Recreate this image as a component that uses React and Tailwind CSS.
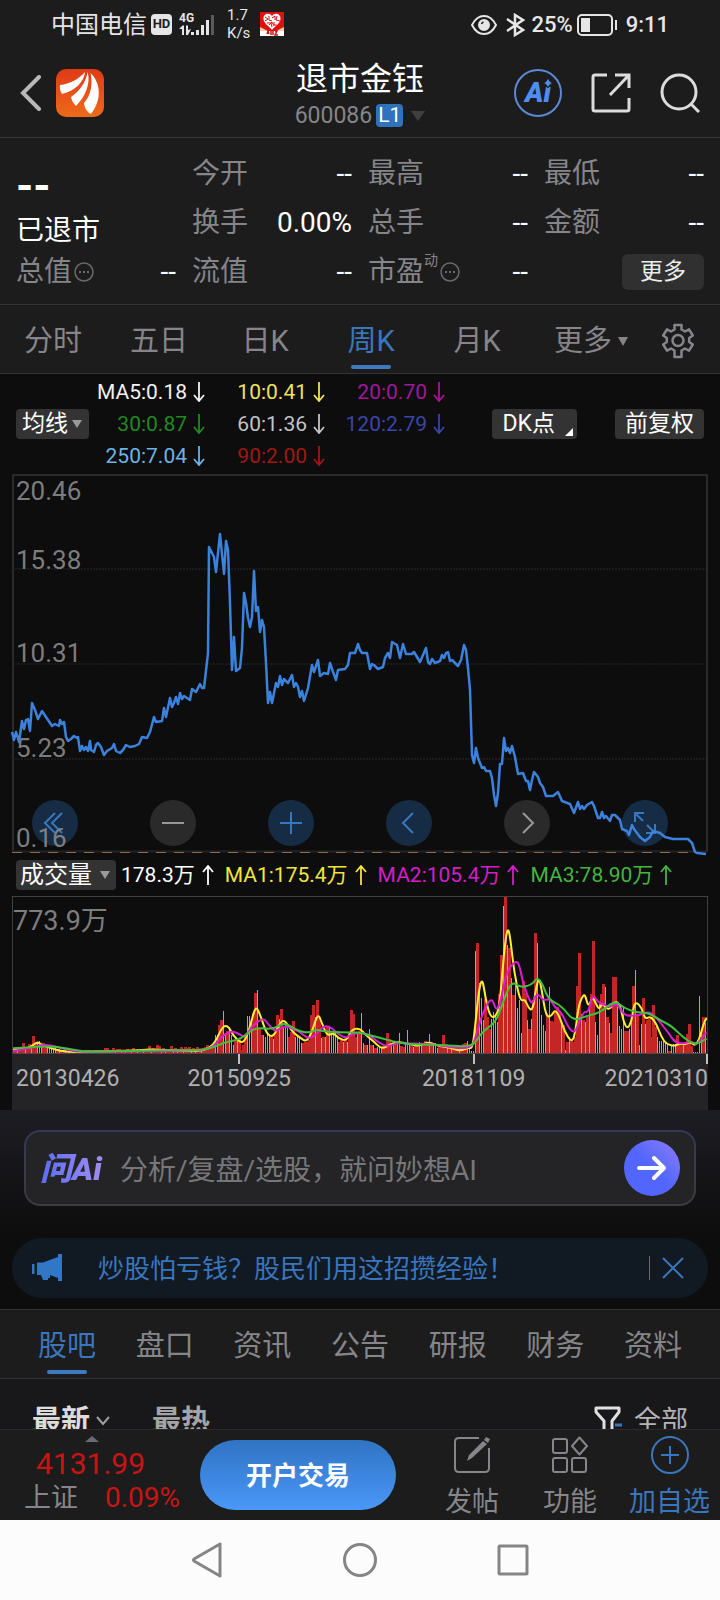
import React, { useState } from "react";
import clsx from "clsx";

const quoteRows = [
  [
    { label: "今开", value: "--" },
    { label: "最高", value: "--" },
    { label: "最低", value: "--" },
  ],
  [
    { label: "换手", value: "0.00%" },
    { label: "总手", value: "--" },
    { label: "金额", value: "--" },
  ],
];

const periods = ["分时", "五日", "日K", "周K", "月K"];

const averages = [
  { text: "MA5:0.18", color: "text-[#f2f2f2]" },
  { text: "10:0.41", color: "text-[#f0e060]" },
  { text: "20:0.70", color: "text-[#a0189a]" },
  { text: "30:0.87", color: "text-[#1f8a1f]" },
  { text: "60:1.36", color: "text-[#c4c4c4]" },
  { text: "120:2.79", color: "text-[#3a45a8]" },
  { text: "250:7.04", color: "text-[#6db3e6]" },
  { text: "90:2.00", color: "text-[#a01814]" },
];

const volumeAverages = [
  { text: "178.3万", color: "text-white" },
  { text: "MA1:175.4万", color: "text-[#f2e53a]" },
  { text: "MA2:105.4万", color: "text-[#d21fca]" },
  { text: "MA3:78.90万", color: "text-[#45b53f]" },
];

const sections = ["股吧", "盘口", "资讯", "公告", "研报", "财务", "资料"];

// closing price, x y pairs
const priceLine =
  "12,732 14,740 16,732 19,742 22,721 24,729 26,720 28,719 30,731 32,703 35,710 38,719 42,711 46,717 52,726 55,724 59,726 60,720 62,724 64,722 66,737 68,741 71,739 74,736 77,738 78,737 80,751 82,746 84,750 86,747 88,751 90,741 91,750 94,752 96,745 98,743 101,747 104,755 107,751 112,748 114,744 116,751 120,753 123,750 126,745 130,747 135,746 139,744 142,737 147,738 150,732 154,717 156,722 162,721 164,708 166,717 170,698 172,707 174,703 176,697 178,704 180,693 182,699 184,696 190,700 192,689 196,692 200,684 202,688 204,688 207,662 208,653 209,547 214,557 216,572 220,534 224,574 226,541 228,550 230,603 232,670 234,637 236,671 240,668 242,648 244,593 246,603 248,618 250,627 252,617 254,571 256,611 258,607 260,632 262,620 264,627 266,663 268,703 270,692 272,703 276,683 278,687 280,676 282,685 284,679 288,683 292,675 294,687 296,683 298,687 300,697 302,691 304,701 308,688 312,665 314,672 318,660 320,676 324,673 328,674 330,663 332,669 336,680 338,670 345,669 348,665 350,653 355,653 358,644 360,650 362,653 367,653 370,669 372,664 374,665 378,669 383,667 385,658 388,653 390,658 392,642 397,645 400,658 403,644 406,654 412,654 414,652 420,662 423,655 426,648 428,662 430,664 432,659 435,663 440,661 442,655 444,658 446,653 448,652 450,661 452,660 458,666 461,660 464,645 466,650 468,668 470,690 472,755 474,763 476,748 478,758 482,768 484,767 486,771 490,771 492,778 494,795 496,806 498,793 500,764 502,764 504,738 506,751 508,748 510,753 512,746 515,757 518,774 523,773 526,781 528,781 530,790 532,780 534,772 538,777 540,783 543,787 546,796 553,796 558,792 562,801 570,804 574,813 578,802 580,809 582,806 584,809 587,805 592,802 594,806 598,818 600,818 602,812 604,818 606,816 610,821 612,815 615,815 620,820 622,829 627,831 629,835 632,825 634,829 640,837 645,841 650,837 653,831 660,833 665,837 673,839 680,839 688,839 692,843 695,852 697,853 706,854";

// weekly volume, r = up week, c = down week, number = height
const volumeBars =
  "r5 r5 c4 r6 r5 r10 c5 r4 r9 c5 r17 r9 c10 c12 c9 r10 r8 c8 c7 c6 c5 c5 r4 c4 r3 r3 c3 r2 c2 r3 c2 r3 r3 c2 r3 r2 c3 r3 r3 c2 r2 r3 r3 c2 r2 r3 r5 r5 c3 r3 r5 c3 r4 r4 c3 r3 c3 r4 r3 c3 r5 r3 c4 r3 r4 c3 r4 r3 r7 c4 r5 r4 r8 r7 c4 r5 c3 r4 r4 r7 c4 r5 c3 r4 r6 c4 r6 r5 r6 c4 r5 c4 r6 r4 c4 r5 r6 r8 r7 r8 r7 c18 c18 r28 r33 c42 c20 r22 c26 c18 c8 r13 c13 r15 r3 r8 r17 c37 c37 c34 r40 r60 c63 r25 r18 c18 c16 c20 c18 r16 c14 r20 r38 c34 r44 c26 c29 c26 r16 r21 r32 c16 c18 c16 c10 r10 r11 r11 r13 r38 r48 c36 r53 r36 c15 r16 c16 r26 c26 c18 c21 c20 c16 r11 r13 c11 r13 c11 r20 r43 r39 r16 c20 r22 c40 c10 r8 c8 c24 r8 c8 r5 c6 c7 c5 r7 r6 r20 r14 c10 c11 r9 c10 c20 r7 r6 c9 c23 c8 r7 c6 r9 r8 c11 c7 r8 r12 r10 c19 r10 c8 c10 c5 r9 r8 r18 r9 c7 r6 c5 r6 r7 r6 c7 r6 r9 r10 c12 c8 c2 c2 c102 r110 c70 c55 c33 r54 r36 r24 c34 c41 c39 c31 r59 r98 c147 r156 c108 r105 c75 r58 c70 c45 c53 c20 r72 r60 c33 r24 c34 r53 r120 c110 c54 c38 c28 c22 r38 c66 r32 r31 r40 r46 r41 c31 r28 c3 r11 c16 r13 r11 r16 r67 r100 c39 r33 c31 r36 c45 r59 r112 c31 c18 c49 r59 r69 c66 r36 c30 r20 r76 r76 c49 c27 c24 c46 r22 r22 c24 c36 r67 c83 r39 c8 c29 r55 c29 r33 r34 r16 r48 r26 c16 c12 c12 c14 c11 c9 r2 c8 c9 c9 r18 r9 r9 c9 r11 r19 r29 r7 c1 c1 c1 c57 c24 r36 c30 c34";

const volumeCurves = [
  {
    color: "#ffee33",
    points:
      "38,568 80,562 97,555 112,542 125,552 150,560 180,570 220,573 330,570 425,568 450,565 500,568 600,570 625,563 645,545 668,495 685,495 700,525 725,548 740,530 757,470 768,434 782,465 800,520 820,528 835,495 850,475 866,495 880,515 900,530 920,543 937,510 954,455 967,490 982,525 1000,515 1015,532 1040,540 1055,505 1080,502 1095,520 1120,540 1145,565 1170,550 1195,542 1230,550 1260,555 1285,542 1315,555 1350,560 1380,570 1405,560 1418,562 1427,480 1437,385 1447,350 1457,415 1470,465 1485,470 1498,440 1510,300 1518,225 1525,200 1532,240 1542,330 1560,420 1575,415 1585,440 1598,450 1608,380 1617,350 1625,385 1638,468 1655,465 1665,445 1680,470 1695,515 1715,544 1725,520 1735,440 1745,410 1755,398 1765,440 1778,405 1788,430 1798,445 1807,425 1820,445 1835,440 1845,420 1860,430 1870,480 1882,505 1895,480 1900,440 1908,422 1925,440 1935,475 1952,465 1970,490 1985,530 2000,550 2025,555 2035,548 2055,550 2070,542 2085,555 2098,535 2110,490 2120,470",
  },
  {
    color: "#d81fd0",
    points:
      "38,570 100,560 120,552 150,552 190,562 225,572 300,572 600,568 640,560 660,530 690,510 710,515 735,530 755,495 790,470 805,490 825,512 845,500 860,495 880,505 900,512 925,535 950,520 965,500 985,493 1010,515 1035,532 1055,520 1080,515 1105,520 1130,540 1160,558 1195,545 1230,548 1280,548 1330,555 1380,562 1418,558 1432,510 1450,450 1475,407 1488,450 1500,430 1520,330 1550,296 1560,320 1570,370 1595,435 1605,405 1617,400 1630,420 1650,412 1665,440 1685,455 1705,500 1723,517 1735,490 1752,450 1765,455 1778,398 1795,425 1813,430 1830,440 1850,425 1870,460 1890,465 1920,462 1945,452 1965,465 1985,490 2005,515 2025,545 2055,548 2070,540 2090,552 2105,530 2120,515",
  },
  {
    color: "#3fc23f",
    points:
      "38,562 80,560 150,555 200,562 250,572 300,572 400,570 500,567 600,568 640,560 670,545 720,535 745,515 770,500 820,505 850,486 870,495 900,512 930,515 950,505 980,513 1060,514 1080,515 1140,530 1190,545 1240,550 1330,552 1418,558 1440,520 1465,500 1490,478 1510,420 1535,360 1560,380 1595,372 1612,348 1628,370 1645,415 1685,435 1720,480 1760,465 1800,455 1845,418 1870,440 1910,455 1945,455 1985,480 2015,495 2050,530 2085,552 2120,533",
  },
];

const smooth = (points) => {
  const p = points.split(" ").map((s) => s.split(",").map(Number));
  let d = `M${p[0][0]} ${p[0][1]}`;
  for (let i = 1; i < p.length - 1; i++) {
    const mx = (p[i][0] + p[i + 1][0]) / 2;
    const my = (p[i][1] + p[i + 1][1]) / 2;
    d += `Q${p[i][0]} ${p[i][1]} ${mx} ${my}`;
  }
  const last = p[p.length - 1];
  return d + `L${last[0]} ${last[1]}`;
};

function Icon({ className, box = "0 0 24 24", width = 2, children }) {
  return (
    <svg
      className={clsx("shrink-0", className)}
      viewBox={box}
      fill="none"
      stroke="currentColor"
      strokeWidth={width}
      aria-hidden="true"
    >
      {children}
    </svg>
  );
}

function StatusBar() {
  return (
    <div className="flex h-12 items-center justify-between pl-[51px] pr-[51px] text-[#e6e6e6]">
      <div className="flex items-center">
        <span className="pt-0.5 text-2xl leading-8">中国电信</span>
        <span className="ml-1 flex h-[21px] w-[21px] items-center justify-center rounded bg-[#e6e6e6] text-[13px] font-bold text-[#1c1c1c]">
          HD
        </span>
        <div className="ml-[7px] flex w-9 flex-col">
          <span className="text-xs font-bold leading-3">4G</span>
          <svg className="-mt-2.5 h-[22px] w-9" viewBox="0 0 36 22" fill="currentColor">
            <path d="M0 15L3.500 11.500H5V21H3V15ZM7 11.500H9V16L12 15L9 21H7Z" />
            <path d="M12 18h3v3h-3zM17 16h3v5h-3zM22 11h3v10h-3zM27 6h3v15h-3z" />
            <path d="M32 1h3v20h-3z" fill="#5a5a5a" />
          </svg>
        </div>
        <div className="ml-3 flex flex-col text-[15px] leading-[18px]">
          <span>1.7</span>
          <span>K/s</span>
        </div>
        <svg className="ml-2.5 h-6 w-6" viewBox="0 0 24 24">
          <path fill="#e01010" d="M0 0h24v24H0z" />
          <path fill="#fff" d="M12 4C9 0 3 2 3.500 7C4 12 9 14 12 18C15 14 20 12 20.500 7C21 2 15 0 12 4Z" />
          <path
            stroke="#e01010"
            fill="none"
            d="M5 5l3 2-3 2M9 4v4l3 1M12 6l3-2v4M17 4l-1 4 4 1M7 11h4l1 4M14 10v3h3M9 13l3-3 2 4"
          />
          <path fill="#f7c9a0" d="M0 15l8 4h8l8-4v4H0z" />
          <path fill="#fff" d="M0 19h24v5H0z" />
          <path stroke="#c01818" fill="none" strokeWidth="1.500" d="M7 22l1-3 1 3M11 19v4M13 19v4M15 19h2l-2 4h3" />
        </svg>
      </div>
      <div className="flex items-center pt-px text-[22px] font-medium leading-8">
        <Icon className="h-[22px] w-[26px]" box="0 0 26 22" width={2}>
          <path d="M1 11C7 -1 19 -1 25 11C19 23 7 23 1 11Z" />
          <circle cx="13" cy="11" r="5" fill="currentColor" />
          <path d="M10.500 10a3 3 0 0 1 2-2" stroke="#1c1c1c" strokeWidth="1.500" />
        </Icon>
        <Icon className="ml-2 h-6 w-5" box="0 0 20 24" width={2.5}>
          <path d="M2 6L18 17L10 22V2L18 7L2 18" />
        </Icon>
        <span className="ml-1.5">25%</span>
        <Icon className="ml-1 h-[22px] w-[41px]" box="0 0 41 22" width={2}>
          <rect x="1" y="1" width="34" height="20" rx="4" />
          <path d="M4 4h9v14H4z" fill="currentColor" stroke="none" />
          <path d="M39 6v10" />
        </Icon>
        <span className="ml-2">9:11</span>
      </div>
    </div>
  );
}

function TitleBar() {
  return (
    <div className="grid h-[90px] grid-cols-[1fr_auto_1fr] items-center border-b border-[#333] px-5">
      <div className="flex items-center gap-3.5">
        <button type="button" aria-label="返回" className="text-[#b8b8b8]">
          <Icon className="h-9 w-[22px]" box="0 0 22 36" width={4}>
            <path d="M19 2L3 18L19 34" strokeLinecap="round" />
          </Icon>
        </button>
        <svg className="h-12 w-12" viewBox="0 0 48 48">
          <defs>
            <linearGradient id="brand" x1="0" y1="0" x2="0" y2="1">
              <stop offset="0" stopColor="#e03a18" />
              <stop offset="1" stopColor="#ee6a1a" />
            </linearGradient>
          </defs>
          <rect width="48" height="48" rx="10" fill="url(#brand)" />
          <g fill="#fff">
            <path d="M4 16C14 15 23 10 29 3C28 13 19 22 6 25C4 22 3.500 19 4 16Z" />
            <path d="M15 28C24 22 30 13 31.500 3C35 13 30 27 20 37C17 34 15.500 31 15 28Z" />
            <path d="M28 34C35 27 37 14 34.500 4C45 14 46 31 35 45C31 43 28.500 39 28 34Z" />
          </g>
        </svg>
      </div>
      <div className="flex flex-col items-center pt-1.5">
        <h1 className="text-[32px] leading-[38px] text-white">退市金钰</h1>
        <button type="button" className="mt-0.5 flex items-center text-[23px] leading-8 text-[#85858a]">
          600086
          <span className="ml-1 rounded bg-[#2f72bd] px-0.5 text-[21px] leading-[23px] text-white">L1</span>
          <svg className="ml-2 h-2.5 w-3.5" viewBox="0 0 14 10" fill="#404040">
            <path d="M0 0h14L7 10z" />
          </svg>
        </button>
      </div>
      <div className="flex items-center justify-end gap-[29px] text-[#dcdcdc]">
        <button
          type="button"
          aria-label="妙想"
          className="relative flex h-12 w-12 items-center justify-center rounded-full border-2 border-[#5a8ad8] text-[#4f8df0]"
        >
          <span className="text-[28px] font-black italic leading-8">Ai</span>
          <svg className="absolute right-[7px] top-[7px] h-2.5 w-2.5" viewBox="0 0 10 10" fill="currentColor">
            <path stroke="#1c1c1c" d="M5 0L7 3.500L10 5L7 6.500L5 10L3 6.500L0 5L3 3.500Z" />
          </svg>
        </button>
        <button type="button" aria-label="分享">
          <Icon className="h-10 w-10" box="0 0 40 40" width={3}>
            <path d="M16 2H4Q2 2 2 4V36Q2 38 4 38H36Q38 38 38 36V25M24 2H38V15M38 2L19 22" />
          </Icon>
        </button>
        <button type="button" aria-label="搜索">
          <Icon className="h-10 w-10" box="0 0 40 40" width={3}>
            <circle cx="19" cy="19" r="17" />
            <path d="M31 31L39 39" />
          </Icon>
        </button>
      </div>
    </div>
  );
}

function Dots() {
  return (
    <svg className="ml-0.5 h-5 w-5" viewBox="0 0 20 20" fill="none" stroke="#6a6a6e" strokeWidth="1.500">
      <circle cx="10" cy="10" r="9" />
      <path d="M5 10h2M9 10h2M13 10h2" strokeWidth="2" />
    </svg>
  );
}

function Quote({ label, value, extra }) {
  return (
    <div className="flex h-[49px] items-center justify-between">
      <dt className="flex items-center text-[28px] leading-9 text-[#85858a]">
        {label}
        {extra}
      </dt>
      <dd className="text-[28px] leading-9 text-white">{value}</dd>
    </div>
  );
}

function QuotePanel() {
  return (
    <dl className="grid grid-cols-4 gap-x-4 border-b border-[#333] px-4 pb-2 pt-[11px]">
      <div className="row-span-2 flex flex-col pt-2 text-white">
        <dd className="text-[44px] font-bold leading-[58px]">--</dd>
        <dt className="text-[28px] leading-8">已退市</dt>
      </div>
      {quoteRows.flat().map((q) => (
        <Quote key={q.label} {...q} />
      ))}
      <Quote label="总值" value="--" extra={<Dots />} />
      <Quote label="流值" value="--" />
      <Quote
        label="市盈"
        value="--"
        extra={
          <>
            <span className="mb-6 text-sm leading-4">动</span>
            <Dots />
          </>
        }
      />
      <div className="flex h-[49px] items-center justify-end">
        <button type="button" className="h-9 rounded-md bg-[#303030] px-[18px] text-[23px] leading-9 text-[#ececec]">
          更多
        </button>
      </div>
    </dl>
  );
}

function PeriodTabs() {
  const [active, setActive] = useState("周K");

  return (
    <nav className="grid h-[69px] grid-cols-[repeat(6,106fr)_84fr] items-center justify-items-center border-b border-[#333] pt-1 text-[29px] leading-10 text-[#85858a]">
      {periods.map((name) => (
        <button
          key={name}
          type="button"
          onClick={() => setActive(name)}
          className={clsx("relative", active === name && "text-[#3a76bd]")}
        >
          {name}
          {active === name && (
            <span className="absolute -bottom-2 left-1/2 h-1 w-10 -translate-x-1/2 rounded-full bg-[#3f7ac0]" />
          )}
        </button>
      ))}
      <button type="button" className="flex items-center gap-1.5 whitespace-nowrap pl-4">
        更多
        <svg className="h-2.5 w-2.5" viewBox="0 0 10 10" fill="currentColor">
          <path d="M0 1h10L5 10z" />
        </svg>
      </button>
      <button type="button" aria-label="设置">
        <Icon className="h-9 w-9" box="0 0 36 36" width={2.5}>
          <path
            strokeLinejoin="round"
            d="M14.500 2h7v4.500l3.500 2 4-2.200 3.800 6.200-3.600 2.500v4l3.600 2.500-3.800 6.200-4-2.200-3.500 2V34h-7v-6.500l-3.500-2-4 2.200-3.800-6.200 3.600-2.500v-4l-3.600-2.500 3.800-6.200 4 2.200 3.500-2z"
          />
          <circle cx="18" cy="17.500" r="5.500" />
        </Icon>
      </button>
    </nav>
  );
}

function Arrow({ up }) {
  return (
    <Icon className="h-5 w-3" box="0 0 12 20" width={1.8}>
      <path d={up ? "M6 20V1M1 7L6 1L11 7" : "M6 0V19M1 13L6 19L11 13"} />
    </Icon>
  );
}

const chip = "flex items-center whitespace-nowrap rounded bg-[#333] text-white leading-[30px] h-[30px]";

function AverageBar() {
  return (
    <div className="flex h-[100px] items-center px-4">
      <button type="button" className={clsx(chip, "pl-1.5 pr-[7px] text-[23px]")}>
        均线
        <svg className="ml-1 h-2 w-2.5" viewBox="0 0 10 8" fill="#9a9a9a">
          <path d="M0 0h10L5 8z" />
        </svg>
      </button>
      <ul className="grid grid-cols-[116px_120px_120px] text-[21px] leading-8">
        {averages.map((a) => (
          <li key={a.text} className={clsx("flex items-center justify-end gap-1.5 whitespace-nowrap", a.color)}>
            {a.text}
            <Arrow />
          </li>
        ))}
      </ul>
      <div className="ml-auto flex gap-[38px]">
        <button type="button" className={clsx(chip, "pl-2.5 pr-1 text-[23px]")}>
          DK点
          <svg className="ml-2.5 mt-4 h-2 w-2" viewBox="0 0 8 8" fill="currentColor">
            <path d="M8 0V8H0z" />
          </svg>
        </button>
        <button type="button" className={clsx(chip, "px-2.5 text-[23px]")}>
          前复权
        </button>
      </div>
    </div>
  );
}

const tools = [
  { name: "最左", blue: true, d: "M23 13L13 23L23 33M30 13L20 23L30 33" },
  { name: "缩小", d: "M12 23H34" },
  { name: "放大", blue: true, d: "M12 23H34M23 12V34" },
  { name: "左移", blue: true, d: "M27 13L17 23L27 33" },
  { name: "右移", d: "M19 13L29 23L19 33" },
  { name: "全屏", blue: true, d: "M21 21L13 13M13 22V13H22M25 25L33 33M33 24V33H24" },
];

function PriceChart() {
  return (
    <div className="relative mx-3 h-[380px]">
      <svg className="h-full w-full" viewBox="12 474 696 380" preserveAspectRatio="none" fill="none">
        <path d="M13 852V475H707V852" stroke="#2a2a2c" strokeWidth="2" />
        <path d="M12 569H707M12 664H707M12 759H707" stroke="#2a2a2a" strokeDasharray="2 1" />
        <path d="M12 851.500H707" stroke="#242424" strokeWidth="2" />
        <path d="M12 852.500H690" stroke="#8a6a4c" strokeDasharray="10 8" />
      </svg>
      <div className="absolute inset-x-5 bottom-2 flex justify-between pr-5">
        {tools.map((t) => (
          <button
            key={t.name}
            type="button"
            aria-label={t.name}
            className={clsx(
              "h-[46px] w-[46px] rounded-full",
              t.blue ? "bg-[#1b3a5c]/70 text-[#3a76bd]" : "bg-[#383838]/70 text-[#989898]"
            )}
          >
            <Icon className="h-full w-full" box="0 0 46 46" width={2}>
              <path d={t.d} />
            </Icon>
          </button>
        ))}
      </div>
      <div className="pointer-events-none absolute inset-0 flex flex-col pl-1 pt-px text-[26px] leading-8 text-[#8c8c8c]/90">
        <span className="h-[70px]">20.46</span>
        <span className="h-[95px]">15.38</span>
        <span className="h-[96px]">10.31</span>
        <span className="h-[92px]">5.23</span>
        <span>0.16</span>
      </div>
      <svg
        className="pointer-events-none absolute inset-0 h-full w-full overflow-visible"
        viewBox="12 474 696 380"
        preserveAspectRatio="none"
        fill="none"
      >
        <polyline points={priceLine} stroke="#3b82dc" strokeWidth="2.500" strokeLinejoin="round" />
      </svg>
    </div>
  );
}

function VolumeChart() {
  const bars = volumeBars.split(" ").map((b) => ({ up: b[0] === "r", h: Number(b.slice(1)) * 3 }));

  return (
    <>
      <div className="flex h-[42px] items-center gap-[11px] px-4 text-[21px] leading-8">
        <button type="button" className={clsx(chip, "-mr-1.5 px-1 text-2xl")}>
          成交量
          <svg className="ml-2 mr-0.5 h-2 w-2.5" viewBox="0 0 10 8" fill="#9a9a9a">
            <path d="M0 0h10L5 8z" />
          </svg>
        </button>
        {volumeAverages.map((v) => (
          <span key={v.text} className={clsx("flex items-center gap-[7px] whitespace-nowrap", v.color)}>
            {v.text}
            <Arrow up />
          </span>
        ))}
      </div>
      <div className="relative mx-3 h-[157px] border-l border-r border-t border-[#404040]">
        <svg className="h-full w-full" viewBox="39 108 2082 468" preserveAspectRatio="none">
          {bars.map((b, i) => (
            <rect
              key={i}
              x={b.up ? 36 + i * 6 : 39 + i * 6}
              y={576 - b.h}
              width={b.up ? 9 : 3}
              height={b.h}
              fill={b.up ? "#c42525" : "#5cc4c6"}
              shapeRendering="crispEdges"
            />
          ))}
          {volumeCurves.map((c) => (
            <path key={c.color} d={smooth(c.points)} fill="none" stroke={c.color} strokeWidth="6" />
          ))}
        </svg>
        <span className="absolute left-0 top-1 text-[27px] leading-10 text-[#7d7d7d]">773.9万</span>
      </div>
      <div className="mx-3 grid h-[57px] grid-cols-[110fr_234fr_234fr_117fr] border-t border-[#4a4a4a] bg-[#242426] text-[23px] leading-[30px] text-[#b0b0b0]">
        <span className="whitespace-nowrap pl-1 pt-2.5">20130426</span>
        <span className="flex flex-col items-center">
          <i className="h-2.5 w-0.5 bg-[#c0c0c0]" />
          20150925
        </span>
        <span className="flex flex-col items-center">
          <i className="h-2.5 w-0.5 bg-[#c0c0c0]" />
          20181109
        </span>
        <span className="flex flex-col items-end">
          <i className="h-2.5 w-0.5 bg-[#c0c0c0]" />
          20210310
        </span>
      </div>
    </>
  );
}

function AskBar() {
  return (
    <div className="bg-linear-to-b from-[#1d1d24] to-[#0d0d0d] px-6 pb-8 pt-5">
      <div className="rounded-2xl bg-linear-to-b from-[#38375a] to-[#3b3b3b] p-0.5">
        <form className="flex h-[72px] items-center rounded-[14px] bg-[#242426] px-3.5">
          <span className="w-[68px] shrink-0 whitespace-nowrap bg-linear-to-r from-[#5a6cf5] to-[#a58ff0] bg-clip-text pt-0.5 text-[32px] font-black italic leading-10 text-transparent">
            问Ai
          </span>
          <input
            type="text"
            aria-label="问妙想AI"
            placeholder="分析/复盘/选股，就问妙想AI"
            className="ml-3 min-w-0 flex-1 bg-transparent pt-1.5 text-[28px] leading-10 text-white outline-none placeholder:text-[#77777a]"
          />
          <button
            type="submit"
            aria-label="发送"
            className="flex h-14 w-14 shrink-0 items-center justify-center rounded-full bg-linear-to-tr from-[#5266ff] from-50% to-[#8c7cf6] text-white"
          >
            <Icon className="h-8 w-8" box="0 0 32 32" width={4}>
              <path d="M3 16H28M18 6L28 16L18 26" strokeLinecap="round" strokeLinejoin="round" />
            </Icon>
          </button>
        </form>
      </div>
    </div>
  );
}

function Banner() {
  return (
    <div className="mx-3 mb-[11px] flex h-[60px] items-center rounded-full bg-[#111a23] pl-5 pr-6 text-[#3a76bd]">
      <svg className="h-7 w-[30px] shrink-0" viewBox="0 0 30 28" fill="#3277c6">
        <path d="M0 10h2.500v10H0zM5 8.500H11L26 3V0h4v27h-4v-3l-8-3v3h-2v2h-5l-2-5H5z" />
      </svg>
      <a href="#banner" className="ml-9 whitespace-nowrap pt-0.5 text-[26px] leading-9">
        炒股怕亏钱？股民们用这招攒经验！
      </a>
      <span className="ml-auto mr-3 h-6 w-px bg-[#3a76bd]" />
      <button type="button" aria-label="关闭">
        <Icon className="h-[22px] w-[22px]" box="0 0 22 22" width={2}>
          <path d="M1 1L21 21M21 1L1 21" />
        </Icon>
      </button>
    </div>
  );
}

function Forum() {
  const [active, setActive] = useState("股吧");

  return (
    <>
      <nav className="flex h-[70px] items-center justify-between border-y border-[#333] bg-[#1c1c1c] px-[38px] pt-1 text-[29px] leading-10 text-[#85858a]">
        {sections.map((name) => (
          <button
            key={name}
            type="button"
            onClick={() => setActive(name)}
            className={clsx("relative", active === name && "text-[#3a76bd]")}
          >
            {name}
            {active === name && (
              <span className="absolute -bottom-2 left-1/2 h-1 w-10 -translate-x-1/2 rounded-full bg-[#3f7ac0]" />
            )}
          </button>
        ))}
      </nav>
      <div className="flex items-center bg-[#18181a] px-8 pb-5 pt-[22px] text-[29px] leading-10">
        <button type="button" className="flex items-center gap-1.5 font-bold text-[#dcdcdc]">
          最新
          <Icon className="h-2.5 w-3.5 text-[#a0a0a0]" box="0 0 14 10" width={2}>
            <path d="M1 1L7 8L13 1" />
          </Icon>
        </button>
        <button type="button" className="ml-[42px] font-bold text-[#a4a4a6]">
          最热
        </button>
        <button type="button" className="ml-auto flex items-center gap-2.5 text-[27px] text-[#b4b4b6]">
          <Icon className="h-[30px] w-[30px] text-[#e0e0e0]" box="0 0 30 30" width={3}>
            <path d="M2 2H25V6L18 15V28L10 24V15L2 6Z" strokeLinejoin="round" />
            <path d="M21 19H28M21 25H28" stroke="#3a76bd" />
          </Icon>
          全部
        </button>
      </div>
    </>
  );
}

function TradeBar() {
  return (
    <footer className="flex h-[91px] shrink-0 items-center border-t border-[#2a2a2a] bg-[#1c1c1c] pl-6 pr-2.5">
      <button type="button" className="flex w-[156px] flex-col items-start text-[#c81414]">
        <svg className="ml-[61px] h-1.5 w-3.5" viewBox="0 0 14 6" fill="#6c6c70">
          <path d="M7 0L14 6H0z" />
        </svg>
        <span className="mt-1 pl-3 text-[30px] leading-9">4131.99</span>
        <span className="flex w-full items-center justify-between text-[28px] leading-8">
          <span className="text-[27px] text-[#85858a]">上证</span>
          0.09%
        </span>
      </button>
      <button
        type="button"
        className="ml-5 h-[70px] w-[196px] rounded-full bg-linear-to-b from-[#3073c2] to-[#4a98fa] pt-0.5 text-[26px] font-bold text-white"
      >
        开户交易
      </button>
      <div className="ml-auto flex pt-1.5 text-[27px] leading-9 text-[#85858a]">
        <button type="button" className="flex w-[98px] flex-col items-center gap-2.5">
          <Icon className="h-[38px] w-[38px]" box="0 0 38 38" width={2}>
            <path d="M26 2H6Q2 2 2 6V32Q2 36 6 36H32Q36 36 36 32V12" />
            <path
              d="M14 25L16 19L30 5L34 8L19 22ZM31 4L33 1L37 3L35 7Z"
              fill="currentColor"
              stroke="none"
            />
          </Icon>
          发帖
        </button>
        <button type="button" className="flex w-[98px] flex-col items-center gap-2.5">
          <Icon className="h-[38px] w-[38px]" box="0 0 38 38" width={2}>
            <rect x="2" y="3" width="14" height="14" rx="2" />
            <rect x="2" y="22" width="14" height="14" rx="2" />
            <rect x="21" y="22" width="14" height="14" rx="2" />
            <path d="M28.500 1.500L36 10L28.500 18.500L21 10Z" strokeLinejoin="round" />
          </Icon>
          功能
        </button>
        <button type="button" className="ml-2.5 flex w-[81px] flex-col items-center gap-2.5 text-[#3a76bd]">
          <Icon className="h-[38px] w-[38px]" box="0 0 38 38" width={2}>
            <circle cx="19" cy="19" r="18" />
            <path d="M19 10V28M10 19H28" />
          </Icon>
          加自选
        </button>
      </div>
    </footer>
  );
}

function SystemNav() {
  return (
    <div className="flex h-20 shrink-0 items-center justify-center gap-[119px] bg-[#fcfcfc] text-[#858585]">
      <button type="button" aria-label="后退">
        <Icon className="h-9 w-8" box="0 0 32 36" width={3}>
          <path d="M29 2V34L3 19Q2 18 3 17Z" strokeLinejoin="round" />
        </Icon>
      </button>
      <button type="button" aria-label="主页">
        <Icon className="h-9 w-9" box="0 0 36 36" width={3}>
          <circle cx="18" cy="18" r="15.500" />
        </Icon>
      </button>
      <button type="button" aria-label="最近任务">
        <Icon className="h-8 w-8" box="0 0 32 32" width={3}>
          <rect x="2" y="2" width="28" height="28" rx="1" />
        </Icon>
      </button>
    </div>
  );
}

export default function App() {
  return (
    <div className="flex h-screen flex-col bg-[#0d0d0d] font-['Roboto','Noto_Sans_CJK_SC',sans-serif]">
      <header className="shrink-0 bg-[#1c1c1c]">
        <StatusBar />
        <TitleBar />
      </header>
      <main className="min-h-0 flex-1 overflow-hidden">
        <div className="bg-[#1c1c1c]">
          <QuotePanel />
          <PeriodTabs />
        </div>
        <AverageBar />
        <PriceChart />
        <VolumeChart />
        <AskBar />
        <Banner />
        <Forum />
      </main>
      <TradeBar />
      <SystemNav />
    </div>
  );
}
